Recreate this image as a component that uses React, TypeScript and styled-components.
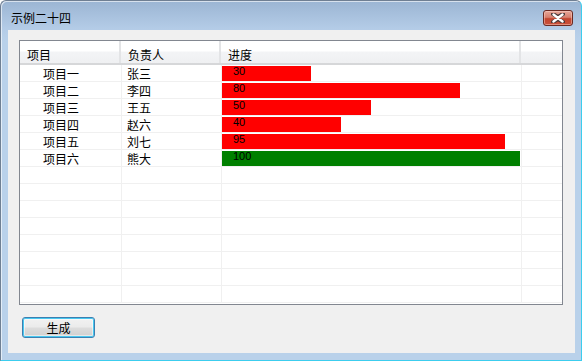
import React from "react";
import styled, { createGlobalStyle } from "styled-components";

const Global = createGlobalStyle`
  html, body { margin: 0; padding: 0; background: #ffffff; }
  body { font-family: "Noto Sans CJK SC", "Liberation Sans", sans-serif; }
`;

const Window = styled.div`
  box-sizing: border-box;
  width: 582px;
  height: 361px;
  display: flex;
  flex-direction: column;
  border: 1px solid #6f7f93;
  border-right-color: #3ccdee;
  border-bottom-color: #3ccdee;
  border-radius: 6px 6px 0 0;
  background: linear-gradient(#9bb5d3 0px, #b4cce7 28px, #b9d1ea 40px);
  box-shadow: inset 1px 1px 0 rgba(255, 255, 255, 0.6);
`;

const TitleBar = styled.div`
  height: 29px;
  display: flex;
  align-items: flex-start;
  justify-content: space-between;
  padding: 0 8px 0 10px;
  box-sizing: border-box;
`;

const Title = styled.div`
  font-size: 12px;
  line-height: 14px;
  margin-top: 10px;
  color: #000;
`;

const CloseButton = styled.div`
  margin-top: 9px;
  width: 30px;
  height: 16px;
  box-sizing: border-box;
  border: 1px solid #6a2a23;
  border-radius: 3px;
  background: linear-gradient(#e7a799 0%, #d7806f 45%, #c2452f 55%, #c9513b 100%);
  box-shadow: inset 0 0 0 1px rgba(255, 220, 210, 0.45);
  display: flex;
  align-items: center;
  justify-content: center;
`;

const Client = styled.div`
  flex: 1;
  margin: 0 6px 7px 7px;
  background: #f0f0f0;
  padding: 10px 11px 0 11px;
  display: flex;
  flex-direction: column;
  align-items: flex-start;
`;

const Grid = styled.div`
  box-sizing: border-box;
  width: 544px;
  height: 265px;
  border: 1px solid #828790;
  background: #ffffff;
  display: flex;
  flex-direction: column;
  overflow: hidden;
`;

const Header = styled.div`
  display: grid;
  grid-template-columns: 101px 100px 300px 1fr;
  height: 24px;
  box-sizing: border-box;
  background: linear-gradient(#ffffff 0px, #ffffff 10px, #f3f4f6 11px, #eff0f2 22px);
  border-bottom: 2px solid #d6d7d9;
`;

const HeadCell = styled.div<{ $last?: boolean }>`
  box-sizing: border-box;
  padding: 6px 0 0 7px;
  font-size: 12px;
  line-height: 16px;
  color: #000;
  border-right: ${(p) => (p.$last ? "none" : "2px solid #e3e4e6")};
`;

const Row = styled.div`
  display: grid;
  grid-template-columns: 102px 100px 300px 1fr;
  height: 17px;
  flex-shrink: 0;
  box-sizing: border-box;
  border-bottom: 1px solid #f0f0f0;
`;

const Cell = styled.div<{ $indent?: number; $last?: boolean }>`
  box-sizing: border-box;
  padding-left: ${(p) => p.$indent ?? 0}px;
  padding-top: 1px;
  font-size: 12px;
  line-height: 15px;
  color: #000;
  border-right: ${(p) => (p.$last ? "none" : "1px solid #f0f0f0")};
  overflow: hidden;
  white-space: nowrap;
`;

const BarCell = styled.div`
  box-sizing: border-box;
  padding-top: 1px;
  border-right: 1px solid #f0f0f0;
`;

const Bar = styled.div<{ $done: boolean }>`
  height: 15px;
  background: ${(p) => (p.$done ? "#008000" : "#ff0000")};
  font-family: "Liberation Sans", sans-serif;
  font-size: 11px;
  line-height: 10px;
  color: #000;
  padding-left: 11px;
  box-sizing: border-box;
  white-space: nowrap;
`;

const Button = styled.button`
  margin: 12px 0 0 3px;
  width: 73px;
  height: 21px;
  box-sizing: border-box;
  border: 1px solid #3c7fb1;
  border-radius: 3px;
  background: linear-gradient(#f2f2f2 0%, #ebebeb 48%, #dddddd 52%, #cfcfcf 100%);
  box-shadow: inset 0 0 0 1px #48c8f0, inset 0 0 0 2px rgba(255, 255, 255, 0.5);
  font-family: "Noto Sans CJK SC", sans-serif;
  font-size: 12px;
  line-height: 14px;
  color: #000;
  padding: 0;
`;

type Item = { name: string; owner: string; progress: number };

const items: Item[] = [
  { name: "项目一", owner: "张三", progress: 30 },
  { name: "项目二", owner: "李四", progress: 80 },
  { name: "项目三", owner: "王五", progress: 50 },
  { name: "项目四", owner: "赵六", progress: 40 },
  { name: "项目五", owner: "刘七", progress: 95 },
  { name: "项目六", owner: "熊大", progress: 100 },
];

const TOTAL_ROWS = 14;
const BAR_MAX = 298;

export default function App() {
  const empties = Array.from({ length: TOTAL_ROWS - items.length });
  return (
    <>
      <Global />
      <Window>
        <TitleBar>
          <Title>示例二十四</Title>
          <CloseButton>
            <svg width="14" height="10" viewBox="0 0 14 10">
              <path
                d="M2 1 L7 4 L12 1 M2 9 L7 6 L12 9 M7 4 L7 6"
                stroke="#4a3a3a"
                strokeWidth="4"
                strokeLinecap="round"
                fill="none"
              />
              <path
                d="M2.5 1.5 L11.5 8.5 M11.5 1.5 L2.5 8.5"
                stroke="#ffffff"
                strokeWidth="2.4"
                strokeLinecap="round"
                fill="none"
              />
            </svg>
          </CloseButton>
        </TitleBar>
        <Client>
          <Grid>
            <Header>
              <HeadCell>项目</HeadCell>
              <HeadCell>负责人</HeadCell>
              <HeadCell>进度</HeadCell>
              <HeadCell $last />
            </Header>
            {items.map((it) => (
              <Row key={it.name}>
                <Cell $indent={23}>{it.name}</Cell>
                <Cell $indent={5}>{it.owner}</Cell>
                <BarCell>
                  <Bar
                    $done={it.progress >= 100}
                    style={{ width: Math.round((BAR_MAX * it.progress) / 100) }}
                  >
                    {it.progress}
                  </Bar>
                </BarCell>
                <Cell $last />
              </Row>
            ))}
            {empties.map((_, i) => (
              <Row key={"e" + i}>
                <Cell />
                <Cell />
                <Cell />
                <Cell $last />
              </Row>
            ))}
          </Grid>
          <Button>生成</Button>
        </Client>
      </Window>
    </>
  );
}
